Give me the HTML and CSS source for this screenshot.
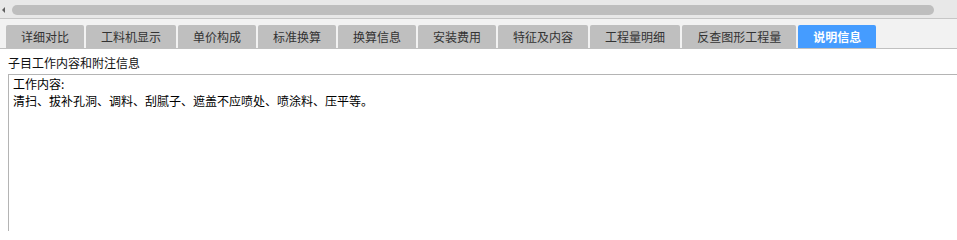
FILE: index.html
```html
<!DOCTYPE html>
<html lang="zh-CN">
<head>
<meta charset="utf-8">
<title>说明信息</title>
<link rel="stylesheet" href="styles.css">
</head>
<body>
<div class="page">
  <div class="hscroll">
    <span class="arrow"></span>
    <div class="thumb"></div>
  </div>
  <div class="tabbar">
    <div class="tab">详细对比</div>
    <div class="tab">工料机显示</div>
    <div class="tab">单价构成</div>
    <div class="tab">标准换算</div>
    <div class="tab">换算信息</div>
    <div class="tab">安装费用</div>
    <div class="tab">特征及内容</div>
    <div class="tab">工程量明细</div>
    <div class="tab">反查图形工程量</div>
    <div class="tab active">说明信息</div>
  </div>
  <div class="content">
    <div class="label">子目工作内容和附注信息</div>
    <div class="memo">
      <div class="line">工作内容:</div>
      <div class="line">清扫、拔补孔洞、调料、刮腻子、遮盖不应喷处、喷涂料、压平等。</div>
    </div>
  </div>
</div>
</body>
</html>
```
FILE: styles.css
```css
html, body {
  margin: 0;
  padding: 0;
  background: #ffffff;
  overflow: hidden;
}
.page {
  width: 957px;
  height: 231px;
  overflow: hidden;
  font-family: "Noto Sans CJK SC", "Noto Sans", sans-serif;
}
.hscroll {
  height: 19px;
  background: #e8e8e8;
  display: flex;
  align-items: center;
  padding-left: 2px;
  box-sizing: border-box;
  border-bottom: 1px solid #c6c6c6;
}
.arrow {
  width: 0;
  height: 0;
  border-top: 3px solid transparent;
  border-bottom: 3px solid transparent;
  border-right: 3px solid #606060;
  margin-right: 7px;
  margin-top: 1px;
}
.thumb {
  width: 922px;
  height: 10px;
  border-radius: 5px;
  background: #bebebe;
  margin-top: 1px;
}
.tabbar {
  height: 30px;
  background: #f2f2f2;
  border-bottom: 1px solid #c0c0c0;
  box-sizing: border-box;
  display: flex;
  align-items: flex-end;
  gap: 2px;
  padding-left: 6px;
}
.tab {
  height: 23px;
  padding: 0 15px;
  background: #bfbfbf;
  color: #333333;
  font-size: 12px;
  line-height: 23px;
  border-radius: 2px 2px 0 0;
  white-space: nowrap;
}
.tab.active {
  background: #459cff;
  color: #ffffff;
  font-weight: bold;
}
.content {
  padding-left: 8px;
}
.label {
  font-size: 12px;
  line-height: 14px;
  color: #111111;
  padding-top: 7px;
  height: 25px;
  box-sizing: border-box;
}
.memo {
  width: 1000px;
  height: 200px;
  border: 1px solid #b4b4b4;
  padding: 0 4px;
  box-sizing: border-box;
  font-size: 12px;
  line-height: 17px;
  color: #000000;
}
.line {
  height: 17px;
  white-space: nowrap;
}
```
